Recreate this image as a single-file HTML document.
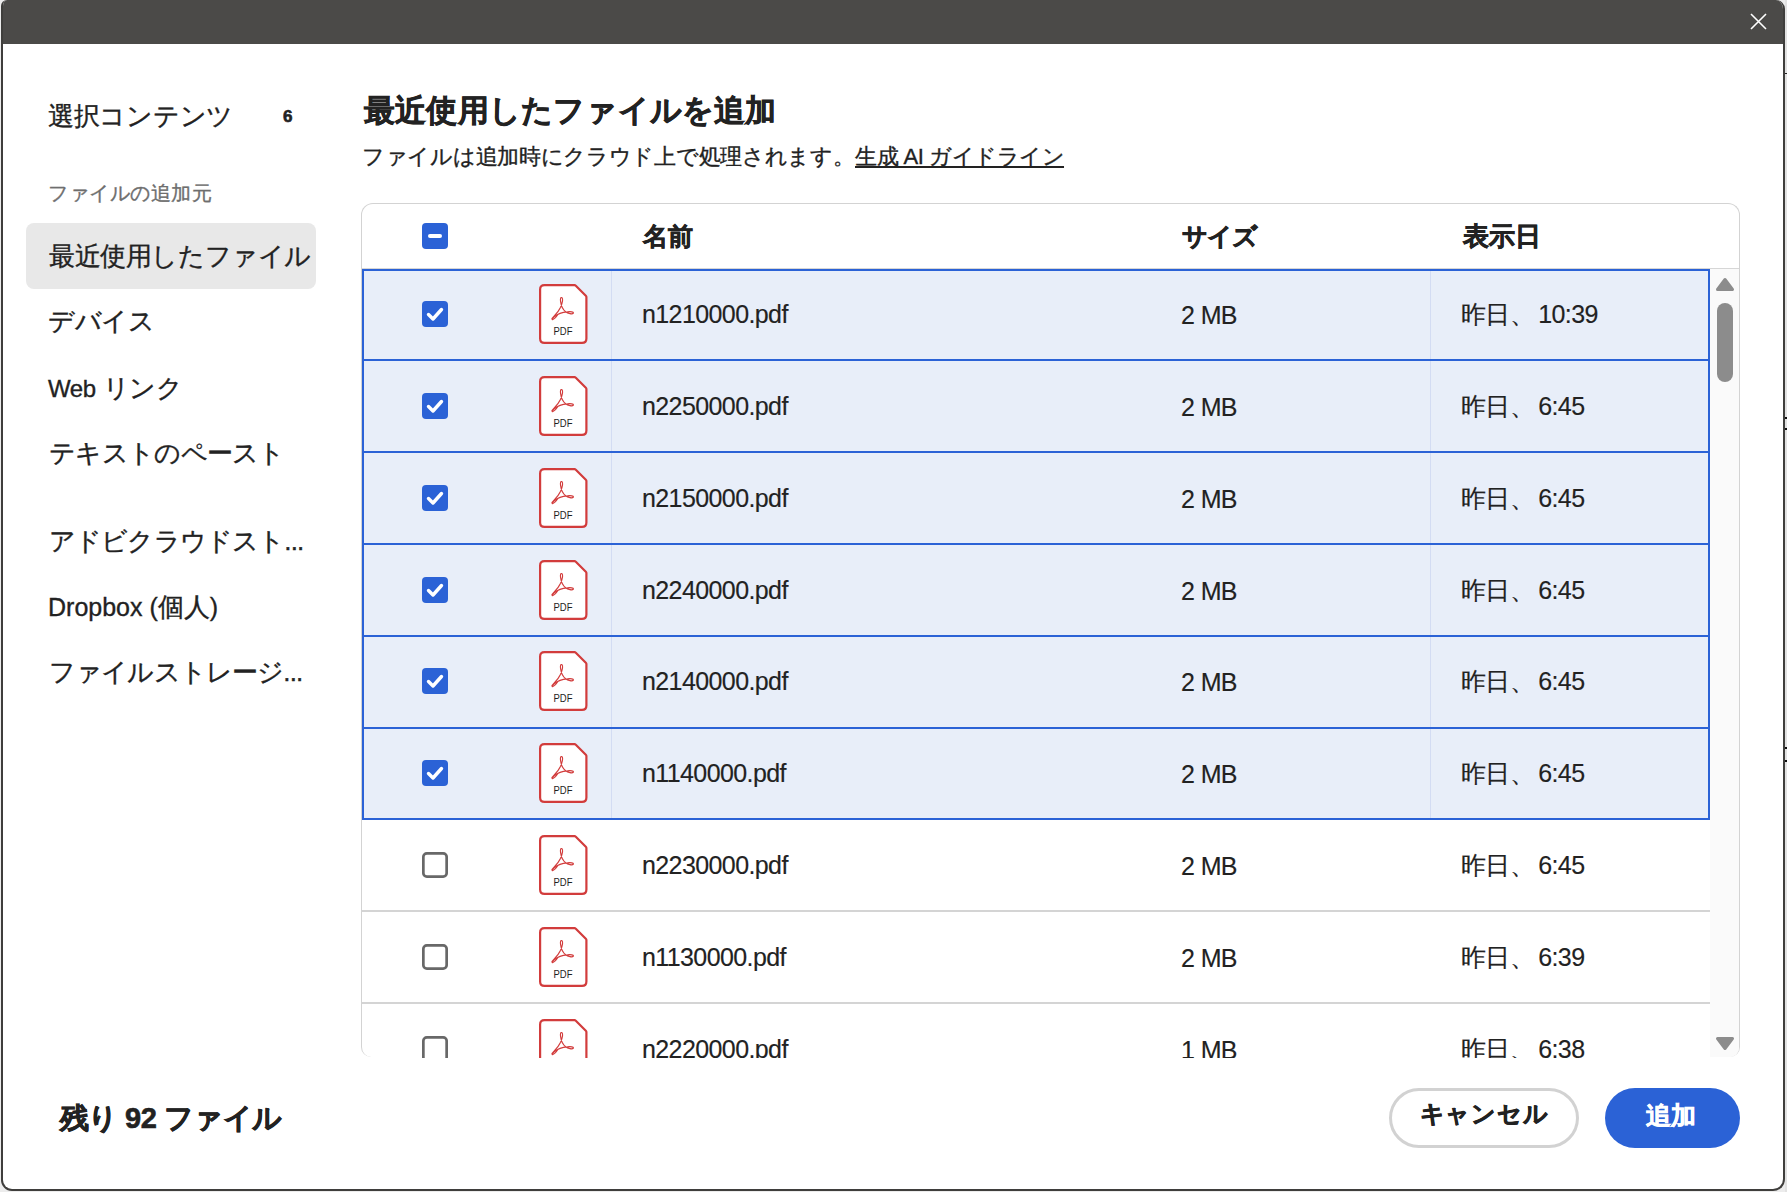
<!DOCTYPE html>
<html><head><meta charset="utf-8"><style>
*{margin:0;padding:0;box-sizing:border-box}
html,body{width:1787px;height:1192px;overflow:hidden;background:#ececec;font-family:"Liberation Sans",sans-serif;color:#222}
.win{position:absolute;left:1px;top:0;width:1784px;height:1191px;border:2px solid #3f3e3c;border-top:none;border-radius:6px 9px 12px 11px;background:#fff;overflow:hidden}
.title{position:absolute;left:0;top:0;right:0;height:44px;background:#4b4a48}
.a{position:absolute;white-space:nowrap;-webkit-text-stroke:0.35px currentColor}
.b{-webkit-text-stroke:0.6px currentColor}
svg.a{display:block}
.side{font-size:26px;line-height:26px;color:#222}
.t{font-size:25px;line-height:25px;letter-spacing:-0.6px;-webkit-text-stroke:0.15px currentColor}
.hdr{font-size:26px;line-height:26px;font-weight:bold}
</style></head><body>
<div class="a" style="left:1785px;top:0;width:2px;height:1192px;background:#e2e2e2"></div>
<div class="a" style="left:1785px;top:73px;width:2px;height:1px;background:#222"></div>
<div class="a" style="left:1785px;top:417px;width:2px;height:2px;background:#111"></div>
<div class="a" style="left:1785px;top:428px;width:2px;height:2px;background:#111"></div>
<div class="a" style="left:1785px;top:747px;width:2px;height:2px;background:#111"></div>
<div class="a" style="left:1785px;top:760px;width:2px;height:2px;background:#111"></div>
<div class="win"><div class="title"></div></div>
<svg class="a" style="left:1750px;top:13px" width="17" height="17" viewBox="0 0 17 17"><path d="M1 1 L16 16 M16 1 L1 16" stroke="#fff" stroke-width="1.6"/></svg>

<div class="a side" style="left:48px;top:103px;letter-spacing:-0.3px">選択コンテンツ</div>
<div class="a b" style="left:283px;top:108px;font-size:17px;line-height:17px;font-weight:bold">6</div>
<div class="a" style="left:48px;top:183px;font-size:20px;line-height:20px;color:#6e6e6e;letter-spacing:0.5px">ファイルの追加元</div>
<div class="a" style="left:26px;top:223px;width:290px;height:66px;background:#e8e8e8;border-radius:8px"></div>
<div class="a side" style="left:49px;top:243px;letter-spacing:-0.4px">最近使用したファイル</div>
<div class="a side" style="left:48px;top:308px;letter-spacing:-0.4px">デバイス</div>
<div class="a side" style="left:48px;top:375px;letter-spacing:-0.4px"><span style="font-size:24px">Web</span> リンク</div>
<div class="a side" style="left:49px;top:440px;letter-spacing:-0.7px">テキストのペースト</div>
<div class="a side" style="left:49px;top:528px;letter-spacing:-0.85px">アドビクラウドスト...</div>
<div class="a side" style="left:48px;top:594px"><span style="font-size:25px">Dropbox (</span>個人<span style="font-size:25px">)</span></div>
<div class="a side" style="left:49px;top:659px;letter-spacing:-0.85px">ファイルストレージ...</div>

<div class="a b" style="left:364px;top:95px;font-size:31px;line-height:31px;font-weight:bold;letter-spacing:0.2px">最近使用したファイルを追加</div>
<div class="a" style="left:362px;top:146px;font-size:22px;line-height:22px;letter-spacing:-0.3px">ファイルは追加時にクラウド上で処理されます。</div>
<div class="a" style="left:855px;top:146px;font-size:22px;line-height:22px;text-decoration:underline;letter-spacing:-0.5px">生成 AI ガイドライン</div>

<div class="a" style="left:361px;top:203px;width:1379px;height:854px;border:1px solid #d3d3d3;border-bottom:none;border-radius:12px 12px 10px 10px;background:#fff"></div>
<div class="a" style="left:362px;top:268px;width:1377px;height:1px;background:#d6d6d6"></div>
<svg class="a" style="left:422px;top:223px" width="26" height="26" viewBox="0 0 26 26"><rect x="0" y="0" width="26" height="26" rx="4" fill="#2b62d6"/><rect x="6" y="11" width="14" height="4" rx="2" fill="#fff"/></svg>
<div class="a hdr b" style="left:642.5px;top:223px;font-size:25px">名前</div>
<div class="a hdr b" style="left:1182px;top:223px;font-size:25px;letter-spacing:-1px">サイズ</div>
<div class="a hdr b" style="left:1462.5px;top:223px;letter-spacing:0px">表示日</div>

<div class="a" style="left:362px;top:269px;width:1348px;height:551px;background:#e8eef9"></div>
<div class="a" style="left:611px;top:271px;width:1px;height:547px;background:#d3dcf3"></div>
<div class="a" style="left:1430px;top:271px;width:1px;height:547px;background:#d3dcf3"></div>
<div class="a" style="left:362px;top:269px;width:1348px;height:2px;background:#2b62d6"></div><div class="a" style="left:362px;top:359px;width:1348px;height:2px;background:#2b62d6"></div><div class="a" style="left:362px;top:451px;width:1348px;height:2px;background:#2b62d6"></div><div class="a" style="left:362px;top:543px;width:1348px;height:2px;background:#2b62d6"></div><div class="a" style="left:362px;top:635px;width:1348px;height:2px;background:#2b62d6"></div><div class="a" style="left:362px;top:727px;width:1348px;height:2px;background:#2b62d6"></div><div class="a" style="left:362px;top:818px;width:1348px;height:2px;background:#2b62d6"></div>
<div class="a" style="left:362px;top:269px;width:2px;height:551px;background:#2b62d6"></div>
<div class="a" style="left:1708px;top:269px;width:2px;height:551px;background:#2b62d6"></div>
<div class="a" style="left:362px;top:910px;width:1348px;height:2px;background:#d4d4d4"></div>
<div class="a" style="left:362px;top:1002px;width:1348px;height:2px;background:#d4d4d4"></div>

<div class="a" style="left:362px;top:269px;width:1348px;height:789px;overflow:hidden">
<div class="a" style="left:-362px;top:-269px;width:1787px;height:1192px">
<svg class="a" style="left:422px;top:301px" width="26" height="26" viewBox="0 0 26 26"><rect x="0" y="0" width="26" height="26" rx="4" fill="#2b62d6"/><path d="M6.5 13.5 L11 18 L19.5 8.5" fill="none" stroke="#fff" stroke-width="3.4" stroke-linecap="round" stroke-linejoin="round"/></svg>
<svg class="a" style="left:538.76px;top:284px" width="50" height="62" viewBox="0 0 50 62"><path d="M5.5 1.1 H35.5 Q36.2 1.1 36.8 1.7 L46.8 11.7 Q47.4 12.3 47.4 13 V54.5 Q47.4 58.9 43 58.9 H5.5 Q1.1 58.9 1.1 54.5 V5.5 Q1.1 1.1 5.5 1.1 Z" fill="#fff" stroke="#d23c3c" stroke-width="2.2"/><g transform="translate(23.9 24.35) scale(0.91) translate(-25.51 -25.2)"><path d="M13.5 36.5 C15 34 20 30.5 23 24 C25 19 26 15 24.5 13.5 C23 12.5 22.5 15 23 18 C23.5 22 25.5 26.5 28.5 29 C31 31 36 32 37 30.5 C37.5 29 34 28.5 30.5 29 C25.5 29.5 20 31 16.5 34 C13.5 36.5 13 38 14.5 37.5 C16 37 18 35 20 32" fill="none" stroke="#d23c3c" stroke-width="1.3" stroke-linejoin="round" stroke-linecap="round"/></g><text x="24" y="51.4" text-anchor="middle" font-family="Liberation Sans" font-size="11.5" textLength="19" lengthAdjust="spacingAndGlyphs" fill="#1e1e1e">PDF</text></svg>
<div class="a t" style="left:642px;top:302px">n1210000.pdf</div>
<div class="a t" style="left:1181px;top:303px">2 MB</div>
<div class="a t" style="left:1461px;top:302px">昨日、<span style="margin-left:4px">10:39</span></div>
<svg class="a" style="left:422px;top:393px" width="26" height="26" viewBox="0 0 26 26"><rect x="0" y="0" width="26" height="26" rx="4" fill="#2b62d6"/><path d="M6.5 13.5 L11 18 L19.5 8.5" fill="none" stroke="#fff" stroke-width="3.4" stroke-linecap="round" stroke-linejoin="round"/></svg>
<svg class="a" style="left:538.76px;top:376px" width="50" height="62" viewBox="0 0 50 62"><path d="M5.5 1.1 H35.5 Q36.2 1.1 36.8 1.7 L46.8 11.7 Q47.4 12.3 47.4 13 V54.5 Q47.4 58.9 43 58.9 H5.5 Q1.1 58.9 1.1 54.5 V5.5 Q1.1 1.1 5.5 1.1 Z" fill="#fff" stroke="#d23c3c" stroke-width="2.2"/><g transform="translate(23.9 24.35) scale(0.91) translate(-25.51 -25.2)"><path d="M13.5 36.5 C15 34 20 30.5 23 24 C25 19 26 15 24.5 13.5 C23 12.5 22.5 15 23 18 C23.5 22 25.5 26.5 28.5 29 C31 31 36 32 37 30.5 C37.5 29 34 28.5 30.5 29 C25.5 29.5 20 31 16.5 34 C13.5 36.5 13 38 14.5 37.5 C16 37 18 35 20 32" fill="none" stroke="#d23c3c" stroke-width="1.3" stroke-linejoin="round" stroke-linecap="round"/></g><text x="24" y="51.4" text-anchor="middle" font-family="Liberation Sans" font-size="11.5" textLength="19" lengthAdjust="spacingAndGlyphs" fill="#1e1e1e">PDF</text></svg>
<div class="a t" style="left:642px;top:394px">n2250000.pdf</div>
<div class="a t" style="left:1181px;top:395px">2 MB</div>
<div class="a t" style="left:1461px;top:394px">昨日、<span style="margin-left:4px">6:45</span></div>
<svg class="a" style="left:422px;top:485px" width="26" height="26" viewBox="0 0 26 26"><rect x="0" y="0" width="26" height="26" rx="4" fill="#2b62d6"/><path d="M6.5 13.5 L11 18 L19.5 8.5" fill="none" stroke="#fff" stroke-width="3.4" stroke-linecap="round" stroke-linejoin="round"/></svg>
<svg class="a" style="left:538.76px;top:468px" width="50" height="62" viewBox="0 0 50 62"><path d="M5.5 1.1 H35.5 Q36.2 1.1 36.8 1.7 L46.8 11.7 Q47.4 12.3 47.4 13 V54.5 Q47.4 58.9 43 58.9 H5.5 Q1.1 58.9 1.1 54.5 V5.5 Q1.1 1.1 5.5 1.1 Z" fill="#fff" stroke="#d23c3c" stroke-width="2.2"/><g transform="translate(23.9 24.35) scale(0.91) translate(-25.51 -25.2)"><path d="M13.5 36.5 C15 34 20 30.5 23 24 C25 19 26 15 24.5 13.5 C23 12.5 22.5 15 23 18 C23.5 22 25.5 26.5 28.5 29 C31 31 36 32 37 30.5 C37.5 29 34 28.5 30.5 29 C25.5 29.5 20 31 16.5 34 C13.5 36.5 13 38 14.5 37.5 C16 37 18 35 20 32" fill="none" stroke="#d23c3c" stroke-width="1.3" stroke-linejoin="round" stroke-linecap="round"/></g><text x="24" y="51.4" text-anchor="middle" font-family="Liberation Sans" font-size="11.5" textLength="19" lengthAdjust="spacingAndGlyphs" fill="#1e1e1e">PDF</text></svg>
<div class="a t" style="left:642px;top:486px">n2150000.pdf</div>
<div class="a t" style="left:1181px;top:487px">2 MB</div>
<div class="a t" style="left:1461px;top:486px">昨日、<span style="margin-left:4px">6:45</span></div>
<svg class="a" style="left:422px;top:577px" width="26" height="26" viewBox="0 0 26 26"><rect x="0" y="0" width="26" height="26" rx="4" fill="#2b62d6"/><path d="M6.5 13.5 L11 18 L19.5 8.5" fill="none" stroke="#fff" stroke-width="3.4" stroke-linecap="round" stroke-linejoin="round"/></svg>
<svg class="a" style="left:538.76px;top:560px" width="50" height="62" viewBox="0 0 50 62"><path d="M5.5 1.1 H35.5 Q36.2 1.1 36.8 1.7 L46.8 11.7 Q47.4 12.3 47.4 13 V54.5 Q47.4 58.9 43 58.9 H5.5 Q1.1 58.9 1.1 54.5 V5.5 Q1.1 1.1 5.5 1.1 Z" fill="#fff" stroke="#d23c3c" stroke-width="2.2"/><g transform="translate(23.9 24.35) scale(0.91) translate(-25.51 -25.2)"><path d="M13.5 36.5 C15 34 20 30.5 23 24 C25 19 26 15 24.5 13.5 C23 12.5 22.5 15 23 18 C23.5 22 25.5 26.5 28.5 29 C31 31 36 32 37 30.5 C37.5 29 34 28.5 30.5 29 C25.5 29.5 20 31 16.5 34 C13.5 36.5 13 38 14.5 37.5 C16 37 18 35 20 32" fill="none" stroke="#d23c3c" stroke-width="1.3" stroke-linejoin="round" stroke-linecap="round"/></g><text x="24" y="51.4" text-anchor="middle" font-family="Liberation Sans" font-size="11.5" textLength="19" lengthAdjust="spacingAndGlyphs" fill="#1e1e1e">PDF</text></svg>
<div class="a t" style="left:642px;top:578px">n2240000.pdf</div>
<div class="a t" style="left:1181px;top:579px">2 MB</div>
<div class="a t" style="left:1461px;top:578px">昨日、<span style="margin-left:4px">6:45</span></div>
<svg class="a" style="left:422px;top:668px" width="26" height="26" viewBox="0 0 26 26"><rect x="0" y="0" width="26" height="26" rx="4" fill="#2b62d6"/><path d="M6.5 13.5 L11 18 L19.5 8.5" fill="none" stroke="#fff" stroke-width="3.4" stroke-linecap="round" stroke-linejoin="round"/></svg>
<svg class="a" style="left:538.76px;top:651px" width="50" height="62" viewBox="0 0 50 62"><path d="M5.5 1.1 H35.5 Q36.2 1.1 36.8 1.7 L46.8 11.7 Q47.4 12.3 47.4 13 V54.5 Q47.4 58.9 43 58.9 H5.5 Q1.1 58.9 1.1 54.5 V5.5 Q1.1 1.1 5.5 1.1 Z" fill="#fff" stroke="#d23c3c" stroke-width="2.2"/><g transform="translate(23.9 24.35) scale(0.91) translate(-25.51 -25.2)"><path d="M13.5 36.5 C15 34 20 30.5 23 24 C25 19 26 15 24.5 13.5 C23 12.5 22.5 15 23 18 C23.5 22 25.5 26.5 28.5 29 C31 31 36 32 37 30.5 C37.5 29 34 28.5 30.5 29 C25.5 29.5 20 31 16.5 34 C13.5 36.5 13 38 14.5 37.5 C16 37 18 35 20 32" fill="none" stroke="#d23c3c" stroke-width="1.3" stroke-linejoin="round" stroke-linecap="round"/></g><text x="24" y="51.4" text-anchor="middle" font-family="Liberation Sans" font-size="11.5" textLength="19" lengthAdjust="spacingAndGlyphs" fill="#1e1e1e">PDF</text></svg>
<div class="a t" style="left:642px;top:669px">n2140000.pdf</div>
<div class="a t" style="left:1181px;top:670px">2 MB</div>
<div class="a t" style="left:1461px;top:669px">昨日、<span style="margin-left:4px">6:45</span></div>
<svg class="a" style="left:422px;top:760px" width="26" height="26" viewBox="0 0 26 26"><rect x="0" y="0" width="26" height="26" rx="4" fill="#2b62d6"/><path d="M6.5 13.5 L11 18 L19.5 8.5" fill="none" stroke="#fff" stroke-width="3.4" stroke-linecap="round" stroke-linejoin="round"/></svg>
<svg class="a" style="left:538.76px;top:743px" width="50" height="62" viewBox="0 0 50 62"><path d="M5.5 1.1 H35.5 Q36.2 1.1 36.8 1.7 L46.8 11.7 Q47.4 12.3 47.4 13 V54.5 Q47.4 58.9 43 58.9 H5.5 Q1.1 58.9 1.1 54.5 V5.5 Q1.1 1.1 5.5 1.1 Z" fill="#fff" stroke="#d23c3c" stroke-width="2.2"/><g transform="translate(23.9 24.35) scale(0.91) translate(-25.51 -25.2)"><path d="M13.5 36.5 C15 34 20 30.5 23 24 C25 19 26 15 24.5 13.5 C23 12.5 22.5 15 23 18 C23.5 22 25.5 26.5 28.5 29 C31 31 36 32 37 30.5 C37.5 29 34 28.5 30.5 29 C25.5 29.5 20 31 16.5 34 C13.5 36.5 13 38 14.5 37.5 C16 37 18 35 20 32" fill="none" stroke="#d23c3c" stroke-width="1.3" stroke-linejoin="round" stroke-linecap="round"/></g><text x="24" y="51.4" text-anchor="middle" font-family="Liberation Sans" font-size="11.5" textLength="19" lengthAdjust="spacingAndGlyphs" fill="#1e1e1e">PDF</text></svg>
<div class="a t" style="left:642px;top:761px">n1140000.pdf</div>
<div class="a t" style="left:1181px;top:762px">2 MB</div>
<div class="a t" style="left:1461px;top:761px">昨日、<span style="margin-left:4px">6:45</span></div>
<svg class="a" style="left:422px;top:852px" width="26" height="26" viewBox="0 0 26 26"><rect x="1.35" y="1.35" width="23.3" height="23.3" rx="3.5" fill="#fff" stroke="#686868" stroke-width="2.7"/></svg>
<svg class="a" style="left:538.76px;top:835px" width="50" height="62" viewBox="0 0 50 62"><path d="M5.5 1.1 H35.5 Q36.2 1.1 36.8 1.7 L46.8 11.7 Q47.4 12.3 47.4 13 V54.5 Q47.4 58.9 43 58.9 H5.5 Q1.1 58.9 1.1 54.5 V5.5 Q1.1 1.1 5.5 1.1 Z" fill="#fff" stroke="#d23c3c" stroke-width="2.2"/><g transform="translate(23.9 24.35) scale(0.91) translate(-25.51 -25.2)"><path d="M13.5 36.5 C15 34 20 30.5 23 24 C25 19 26 15 24.5 13.5 C23 12.5 22.5 15 23 18 C23.5 22 25.5 26.5 28.5 29 C31 31 36 32 37 30.5 C37.5 29 34 28.5 30.5 29 C25.5 29.5 20 31 16.5 34 C13.5 36.5 13 38 14.5 37.5 C16 37 18 35 20 32" fill="none" stroke="#d23c3c" stroke-width="1.3" stroke-linejoin="round" stroke-linecap="round"/></g><text x="24" y="51.4" text-anchor="middle" font-family="Liberation Sans" font-size="11.5" textLength="19" lengthAdjust="spacingAndGlyphs" fill="#1e1e1e">PDF</text></svg>
<div class="a t" style="left:642px;top:853px">n2230000.pdf</div>
<div class="a t" style="left:1181px;top:854px">2 MB</div>
<div class="a t" style="left:1461px;top:853px">昨日、<span style="margin-left:4px">6:45</span></div>
<svg class="a" style="left:422px;top:944px" width="26" height="26" viewBox="0 0 26 26"><rect x="1.35" y="1.35" width="23.3" height="23.3" rx="3.5" fill="#fff" stroke="#686868" stroke-width="2.7"/></svg>
<svg class="a" style="left:538.76px;top:927px" width="50" height="62" viewBox="0 0 50 62"><path d="M5.5 1.1 H35.5 Q36.2 1.1 36.8 1.7 L46.8 11.7 Q47.4 12.3 47.4 13 V54.5 Q47.4 58.9 43 58.9 H5.5 Q1.1 58.9 1.1 54.5 V5.5 Q1.1 1.1 5.5 1.1 Z" fill="#fff" stroke="#d23c3c" stroke-width="2.2"/><g transform="translate(23.9 24.35) scale(0.91) translate(-25.51 -25.2)"><path d="M13.5 36.5 C15 34 20 30.5 23 24 C25 19 26 15 24.5 13.5 C23 12.5 22.5 15 23 18 C23.5 22 25.5 26.5 28.5 29 C31 31 36 32 37 30.5 C37.5 29 34 28.5 30.5 29 C25.5 29.5 20 31 16.5 34 C13.5 36.5 13 38 14.5 37.5 C16 37 18 35 20 32" fill="none" stroke="#d23c3c" stroke-width="1.3" stroke-linejoin="round" stroke-linecap="round"/></g><text x="24" y="51.4" text-anchor="middle" font-family="Liberation Sans" font-size="11.5" textLength="19" lengthAdjust="spacingAndGlyphs" fill="#1e1e1e">PDF</text></svg>
<div class="a t" style="left:642px;top:945px">n1130000.pdf</div>
<div class="a t" style="left:1181px;top:946px">2 MB</div>
<div class="a t" style="left:1461px;top:945px">昨日、<span style="margin-left:4px">6:39</span></div>
<svg class="a" style="left:422px;top:1036px" width="26" height="26" viewBox="0 0 26 26"><rect x="1.35" y="1.35" width="23.3" height="23.3" rx="3.5" fill="#fff" stroke="#686868" stroke-width="2.7"/></svg>
<svg class="a" style="left:538.76px;top:1019px" width="50" height="62" viewBox="0 0 50 62"><path d="M5.5 1.1 H35.5 Q36.2 1.1 36.8 1.7 L46.8 11.7 Q47.4 12.3 47.4 13 V54.5 Q47.4 58.9 43 58.9 H5.5 Q1.1 58.9 1.1 54.5 V5.5 Q1.1 1.1 5.5 1.1 Z" fill="#fff" stroke="#d23c3c" stroke-width="2.2"/><g transform="translate(23.9 24.35) scale(0.91) translate(-25.51 -25.2)"><path d="M13.5 36.5 C15 34 20 30.5 23 24 C25 19 26 15 24.5 13.5 C23 12.5 22.5 15 23 18 C23.5 22 25.5 26.5 28.5 29 C31 31 36 32 37 30.5 C37.5 29 34 28.5 30.5 29 C25.5 29.5 20 31 16.5 34 C13.5 36.5 13 38 14.5 37.5 C16 37 18 35 20 32" fill="none" stroke="#d23c3c" stroke-width="1.3" stroke-linejoin="round" stroke-linecap="round"/></g><text x="24" y="51.4" text-anchor="middle" font-family="Liberation Sans" font-size="11.5" textLength="19" lengthAdjust="spacingAndGlyphs" fill="#1e1e1e">PDF</text></svg>
<div class="a t" style="left:642px;top:1037px">n2220000.pdf</div>
<div class="a t" style="left:1181px;top:1038px">1 MB</div>
<div class="a t" style="left:1461px;top:1037px">昨日、<span style="margin-left:4px">6:38</span></div>
</div></div>

<div class="a" style="left:1710px;top:269px;width:29px;height:788px;background:#fafafa;border-bottom-right-radius:9px"></div>
<svg class="a" style="left:1715px;top:277px" width="20" height="15" viewBox="0 0 20 15"><path d="M10 2.5 L17.5 12.5 H2.5 Z" fill="#8c8c8c" stroke="#8c8c8c" stroke-width="3" stroke-linejoin="round"/></svg>
<div class="a" style="left:1717px;top:303px;width:16px;height:79px;border-radius:8px;background:#8c8c8c"></div>
<svg class="a" style="left:1715px;top:1036px" width="20" height="15" viewBox="0 0 20 15"><path d="M10 12.5 L17.5 2.5 H2.5 Z" fill="#8c8c8c" stroke="#8c8c8c" stroke-width="3" stroke-linejoin="round"/></svg>

<div class="a b" style="left:59.5px;top:1104px;font-size:29px;line-height:29px;font-weight:bold;letter-spacing:-0.5px">残り 92 ファイル</div>
<div class="a" style="left:1389px;top:1088px;width:190px;height:60px;border-radius:30px;border:3px solid #d2d2d2;background:#fff"></div>
<div class="a b" style="left:1419.5px;top:1102px;font-size:24px;line-height:24px;font-weight:bold;letter-spacing:0.8px">キャンセル</div>
<div class="a" style="left:1605px;top:1088px;width:135px;height:60px;border-radius:30px;background:#2b62d6"></div>
<div class="a b" style="left:1646px;top:1103px;font-size:25px;line-height:25px;font-weight:bold;color:#fff">追加</div>
</body></html>
